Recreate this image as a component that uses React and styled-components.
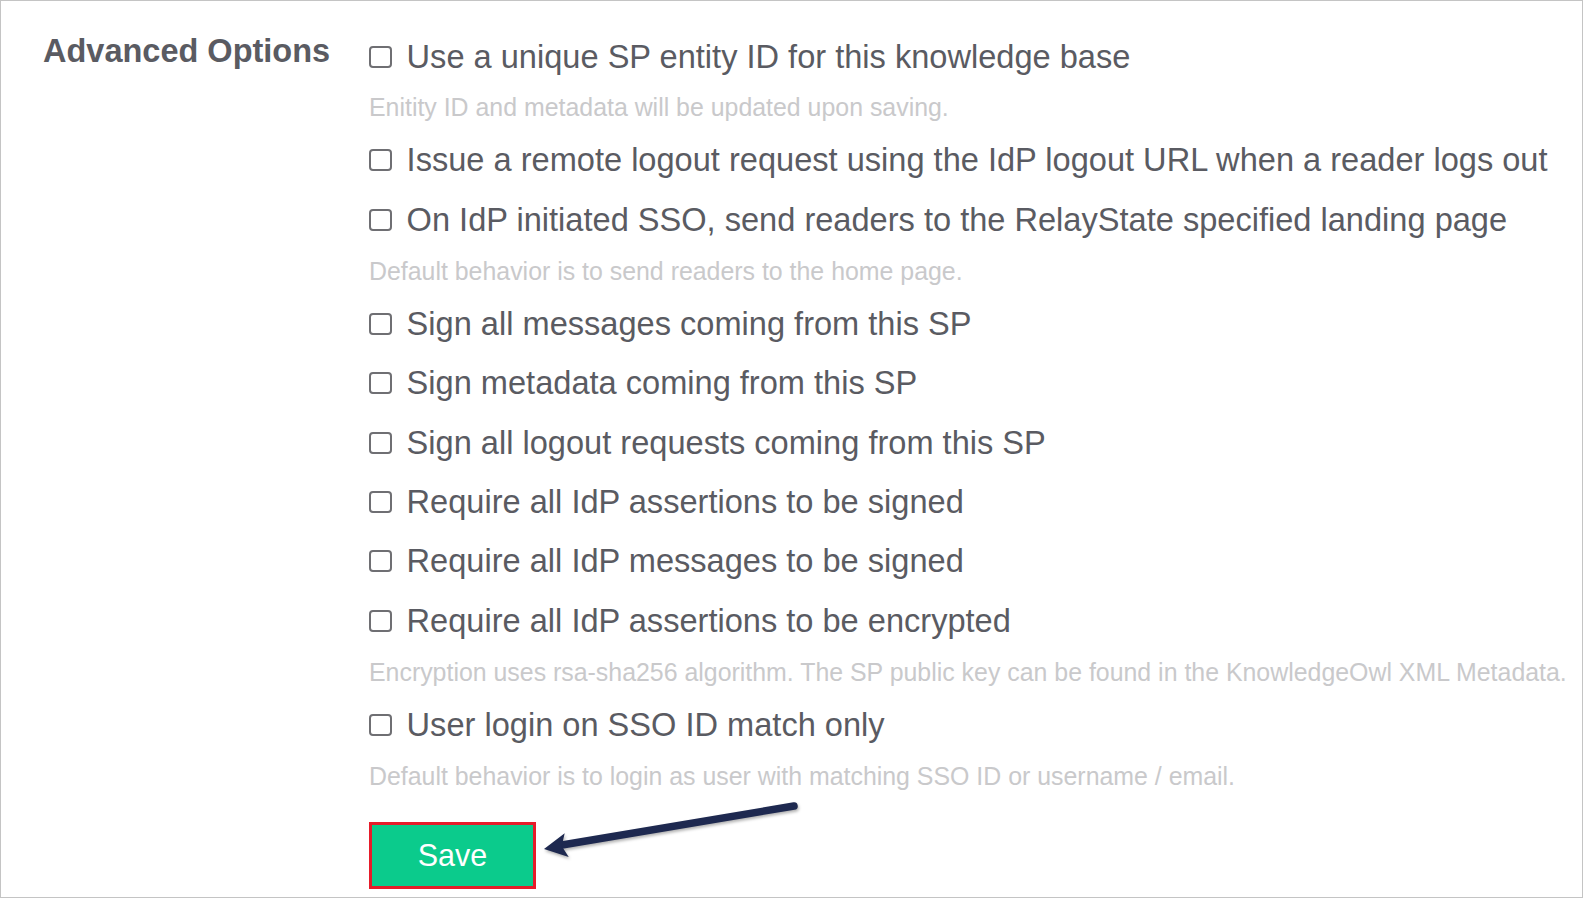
import React from 'react';
import styled, { createGlobalStyle } from 'styled-components';

/* START: CSS in JS */

const GlobalStyle = createGlobalStyle`
    html, body {
        margin: 0;
        padding: 0;
        background: #ffffff;
    }
    body {
        font-family: 'Liberation Sans', Arial, sans-serif;
    }
`

const Frame = styled.div`
    position: relative;
    box-sizing: border-box;
    width: 1583px;
    height: 898px;
    border: 1px solid #c4c4c4;
    padding: 26px 0 0 42px;
    display: grid;
    grid-template-columns: 326px 1fr;
    align-items: start;
    overflow: hidden;
`

const Title = styled.h2`
    margin: -5px 0 0;
    font-size: 32.5px;
    line-height: 59.4px;
    font-weight: 700;
    color: #5a5b62;
    white-space: nowrap;
`

const OptionList = styled.div`
    display: flex;
    flex-direction: column;
`

const Row = styled.label`
    display: flex;
    align-items: center;
    gap: 14.6px;
    height: 59.4px;
    font-size: 32.6px;
    color: #5a5b62;
    white-space: nowrap;
    cursor: pointer;
`

const Box = styled.input`
    appearance: none;
    box-sizing: border-box;
    width: 23px;
    height: 22px;
    margin: 0;
    flex: none;
    border: 2px solid #6f6f73;
    border-radius: 4px;
    background: #ffffff;
`

const Hint = styled.div`
    box-sizing: border-box;
    height: ${p => p.$first ? 44.3 : 44.7}px;
    padding-top: ${p => p.$first ? 9 : 9.5}px;
    font-size: 24.9px;
    line-height: 25px;
    color: #c9c9cb;
    white-space: nowrap;
`

const SaveButton = styled.button`
    box-sizing: border-box;
    width: 167px;
    height: 67px;
    margin-top: 23px;
    padding: 0;
    border: 3px solid #e61c2a;
    background: #0bcb8c;
    color: #ffffff;
    font-family: 'Liberation Sans', Arial, sans-serif;
    font-size: 30.5px;
    cursor: pointer;
`

const Arrow = styled.svg`
    position: absolute;
    left: 530px;
    top: 790px;
    width: 275px;
    height: 80px;
    overflow: visible;
    pointer-events: none;
    filter: drop-shadow(1px 2px 1.5px rgba(0, 0, 0, 0.3));
`

/* END: CSS in JS */

const options = [
    { label: 'Use a unique SP entity ID for this knowledge base', hint: 'Enitity ID and metadata will be updated upon saving.', first: true },
    { label: 'Issue a remote logout request using the IdP logout URL when a reader logs out' },
    { label: 'On IdP initiated SSO, send readers to the RelayState specified landing page', hint: 'Default behavior is to send readers to the home page.' },
    { label: 'Sign all messages coming from this SP' },
    { label: 'Sign metadata coming from this SP' },
    { label: 'Sign all logout requests coming from this SP' },
    { label: 'Require all IdP assertions to be signed' },
    { label: 'Require all IdP messages to be signed' },
    { label: 'Require all IdP assertions to be encrypted', hint: 'Encryption uses rsa-sha256 algorithm. The SP public key can be found in the KnowledgeOwl XML Metadata.' },
    { label: 'User login on SSO ID match only', hint: 'Default behavior is to login as user with matching SSO ID or username / email.' },
]

export default function App() {
    return (
        <>
            <GlobalStyle />
            <Frame>
                <Title>Advanced Options</Title>
                <OptionList>
                    {options.map(opt => (
                        <React.Fragment key={opt.label}>
                            <Row>
                                <Box type="checkbox" />
                                {opt.label}
                            </Row>
                            {opt.hint && <Hint $first={opt.first}>{opt.hint}</Hint>}
                        </React.Fragment>
                    ))}
                    <div>
                        <SaveButton type="button">Save</SaveButton>
                    </div>
                </OptionList>
                <Arrow viewBox="0 0 275 80">
                    <line x1="263" y1="15" x2="31" y2="54" stroke="#1e2950" strokeWidth="7.5" strokeLinecap="round" />
                    <polygon points="13,58 33.7,42.3 30.7,55 37.7,65.9" fill="#1e2950" />
                </Arrow>
            </Frame>
        </>
    )
}
